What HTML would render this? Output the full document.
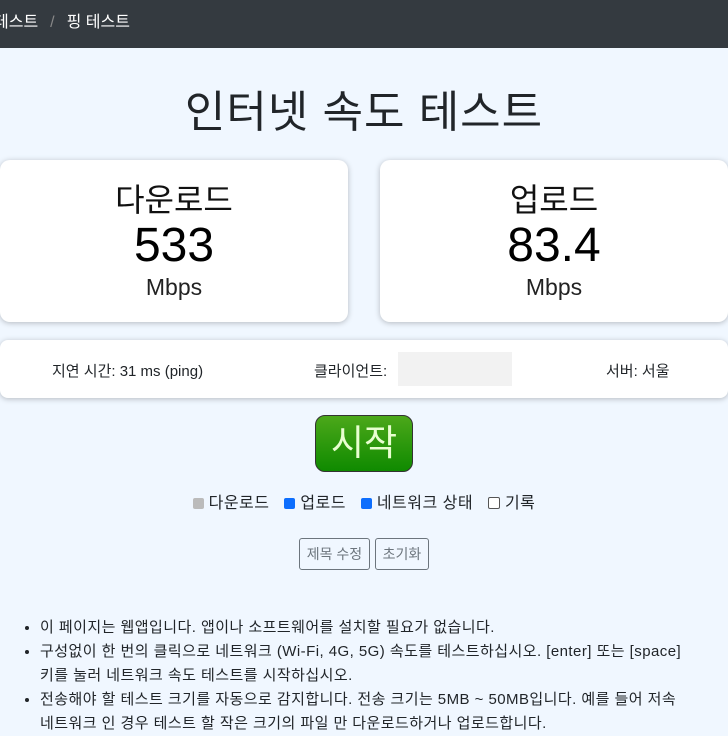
<!DOCTYPE html><html><head><meta charset="utf-8"><style>
body{margin:0;width:728px;height:728px;overflow:hidden;background:#f0f7ff;font-family:"Liberation Sans","Noto Sans CJK KR",sans-serif;color:#212529;position:relative}
.hd{position:absolute;left:0;top:0;width:728px;height:48px;background:#343a40;color:#fff;font-size:16px;line-height:46px}
.abs{position:absolute}
.card{position:absolute;background:#fff;border-radius:10px;box-shadow:0 1px 6px rgba(0,0,0,.25);text-align:center}
.t{font-size:32px;color:#111;line-height:40px}
.n{font-size:48px;color:#000;line-height:52px}
.u{font-size:23px;color:#222}
ul{position:absolute;left:0;top:616px;margin:0;padding-left:40px;font-size:15px;line-height:24px;width:668px;letter-spacing:.45px;word-break:keep-all}
.cb{display:inline-block;width:11px;height:11px;border-radius:2px;vertical-align:-1px;margin-right:5px}
.btn{display:inline-block;border:1px solid #6c757d;border-radius:3px;color:#6c757d;font-size:14px;padding:5px 7px}
</style></head><body>
<div class="hd"><span style="margin-left:-6px">테스트</span><span style="color:#888;margin:0 12px">/</span>핑 테스트</div>
<div class="abs" style="left:0;top:76px;width:728px;text-align:center;font-size:44px;color:#212529;letter-spacing:1px">인터넷 속도 테스트</div>
<div class="card" style="left:0;top:160px;width:348px;height:162px"><div class="t" style="margin-top:20px">다운로드</div><div class="n">533</div><div class="u" style="margin-top:2px">Mbps</div></div>
<div class="card" style="left:380px;top:160px;width:348px;height:162px"><div class="t" style="margin-top:20px">업로드</div><div class="n">83.4</div><div class="u" style="margin-top:2px">Mbps</div></div>
<div class="card" style="left:0;top:340px;width:728px;height:58px;border-radius:8px;font-size:15px">
<span class="abs" style="left:52px;top:20px">지연 시간: 31 ms (ping)</span>
<span class="abs" style="left:314px;top:20px">클라이언트:</span>
<span class="abs" style="left:398px;top:12px;width:114px;height:34px;background:#f2f2f2"></span>
<span class="abs" style="left:606px;top:20px">서버: 서울</span></div>
<div class="abs" style="left:315px;top:415px;width:96px;height:55px;border:1px solid #333;border-radius:10px;background:linear-gradient(#4ca81a,#0f8a00);color:#e8ffd0;font-size:36px;text-align:center;line-height:54px">시작</div>
<div class="abs" style="left:0;top:489px;width:728px;text-align:center;font-size:16px;letter-spacing:.5px">
<span class="cb" style="background:#bbb"></span>다운로드 &nbsp; <span class="cb" style="background:#0d6efd"></span>업로드 &nbsp; <span class="cb" style="background:#0d6efd"></span>네트워크 상태 &nbsp; <span class="cb" style="border:1px solid #555;background:#fff;width:10px;height:10px"></span>기록</div>
<div class="abs" style="left:0;top:538px;width:728px;text-align:center"><span class="btn">제목 수정</span> <span class="btn">초기화</span></div>
<ul><li>이 페이지는 웹앱입니다. 앱이나 소프트웨어를 설치할 필요가 없습니다.</li>
<li>구성없이 한 번의 클릭으로 네트워크 (Wi-Fi, 4G, 5G) 속도를 테스트하십시오. [enter] 또는 [space] 키를 눌러 네트워크 속도 테스트를 시작하십시오.</li>
<li>전송해야 할 테스트 크기를 자동으로 감지합니다. 전송 크기는 5MB ~ 50MB입니다. 예를 들어 저속 네트워크 인 경우 테스트 할 작은 크기의 파일 만 다운로드하거나 업로드합니다.</li></ul>
</body></html>
